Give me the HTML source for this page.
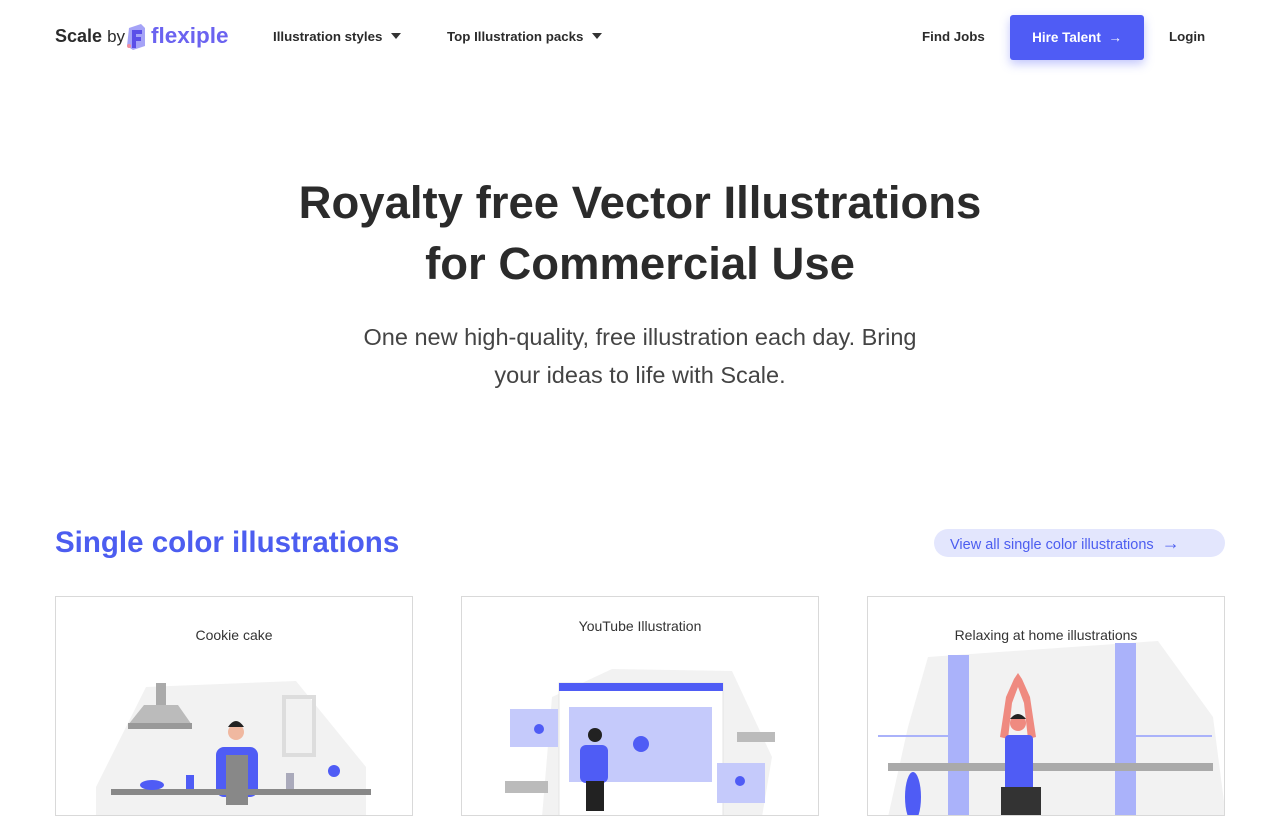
<!DOCTYPE html>
<html><head><meta charset="utf-8"><style>
*{margin:0;padding:0;box-sizing:border-box}
body{width:1280px;height:800px;overflow:hidden;background:#fff;font-family:"Liberation Sans",sans-serif;color:#333;position:relative}
.a{position:absolute}
.nav{font-size:13.3px;font-weight:bold;color:#2b2b2b}
.tri{display:inline-block;width:0;height:0;border-left:5px solid transparent;border-right:5px solid transparent;border-top:6px solid #333;margin-left:9px;vertical-align:2px}
.card{position:absolute;top:596px;width:358px;height:220px;border:1px solid #d9d9d9;overflow:hidden;background:#fff}
.card .t{position:absolute;left:0;right:0;text-align:center;font-size:14px;color:#333}
</style></head><body>
<div class="a" style="left:55px;top:26px;font-size:18px;color:#2b2b2b;white-space:nowrap"><span style="font-weight:600">Scale</span> <span style="font-size:17px">by</span></div>
<svg class="a" style="left:125px;top:22px" width="22" height="30" viewBox="0 0 22 30"><path d="M4 6 L16 2 L20 6 L20 24 L8 28 L2 24 Z" fill="#a5a3f7"/><path d="M7 8 H17 V12 H11 V15 H16 V19 H11 V26 H7 Z" fill="#5b4fe8"/><circle cx="4" cy="24" r="2" fill="#f08fa0"/></svg>
<div class="a" style="left:151px;top:23px;font-size:22.5px;font-weight:bold;color:#6b63f0">flexiple</div>
<div class="a nav" style="left:273px;top:29px">Illustration styles<span class="tri"></span></div>
<div class="a nav" style="left:447px;top:29px">Top Illustration packs<span class="tri"></span></div>
<div class="a nav" style="left:922px;top:29px">Find Jobs</div>
<div class="a" style="left:1010px;top:15px;width:134px;height:45px;background:#4f5cf5;border-radius:3px;box-shadow:0 4px 10px rgba(79,92,245,.35);color:#fff;font-size:13.5px;font-weight:bold;line-height:45px;text-align:center">Hire Talent &nbsp;→</div>
<div class="a nav" style="left:1169px;top:29px">Login</div>
<div class="a" style="left:0;width:1280px;top:172px;text-align:center;font-size:45.5px;font-weight:bold;line-height:61px;color:#2b2b2b">Royalty free Vector Illustrations<br>for Commercial Use</div>
<div class="a" style="left:0;width:1280px;top:318px;text-align:center;font-size:23.5px;line-height:38px;color:#444">One new high-quality, free illustration each day. Bring<br>your ideas to life with Scale.</div>
<div class="a" style="left:55px;top:526px;font-size:29.5px;font-weight:bold;color:#4c5df0">Single color illustrations</div>
<div class="a" style="left:934px;top:529px;width:291px;height:28px;background:#e3e6fd;border-radius:14px;color:#4c5df0;font-size:14.5px;line-height:28px;padding-left:16px;white-space:nowrap">View all single color illustrations &nbsp;<span style="font-size:18px">→</span></div>

<div class="card" style="left:55px"><div class="t" style="top:30px">Cookie cake</div>
<svg class="a" style="left:0;top:0" width="358" height="220">
<path d="M40 190 L90 90 L240 84 L310 170 L310 220 L40 220Z" fill="#f2f2f2"/>
<rect x="100" y="86" width="10" height="22" fill="#aaa"/><path d="M88 108 H122 L136 128 H72Z" fill="#bbb"/><rect x="72" y="126" width="64" height="6" fill="#999"/>
<rect x="228" y="100" width="30" height="58" fill="none" stroke="#ddd" stroke-width="4"/>
<rect x="160" y="150" width="42" height="50" rx="8" fill="#4f5cf5"/><rect x="170" y="158" width="22" height="50" fill="#888"/>
<circle cx="180" cy="135" r="8" fill="#f0b8a0"/><path d="M172 130 Q180 118 188 130Z" fill="#222"/>
<rect x="55" y="192" width="260" height="6" fill="#888"/><ellipse cx="96" cy="188" rx="12" ry="5" fill="#4f5cf5"/><rect x="130" y="178" width="8" height="14" fill="#4f5cf5"/><rect x="230" y="176" width="8" height="16" fill="#aab"/><circle cx="278" cy="174" r="6" fill="#4f5cf5"/>
</svg></div>

<div class="card" style="left:461px"><div class="t" style="top:21px">YouTube Illustration</div>
<svg class="a" style="left:0;top:0" width="358" height="220">
<path d="M90 100 L150 72 L270 74 L310 160 L300 220 L80 220Z" fill="#f2f2f2"/>
<rect x="97" y="86" width="164" height="140" fill="#fff" stroke="#e4e4e4"/><rect x="97" y="86" width="164" height="8" fill="#4f5cf5"/>
<rect x="107" y="110" width="143" height="75" fill="#c5cafb"/><circle cx="179" cy="147" r="8" fill="#4f5cf5"/>
<rect x="48" y="112" width="48" height="38" fill="#c5cafb"/><circle cx="77" cy="132" r="5" fill="#4f5cf5"/>
<rect x="255" y="166" width="48" height="40" fill="#c5cafb"/><circle cx="278" cy="184" r="5" fill="#4f5cf5"/>
<rect x="275" y="135" width="38" height="10" fill="#bbb"/><rect x="43" y="184" width="43" height="12" fill="#bbb"/>
<rect x="118" y="148" width="28" height="38" rx="6" fill="#4f5cf5"/><rect x="124" y="184" width="18" height="30" fill="#222"/><circle cx="133" cy="138" r="7" fill="#222"/>
</svg></div>

<div class="card" style="left:867px"><div class="t" style="top:30px">Relaxing at home illustrations</div>
<svg class="a" style="left:0;top:0" width="358" height="220">
<path d="M60 60 L290 44 L345 120 L358 220 L20 220 L40 130Z" fill="#f2f2f2"/>
<rect x="80" y="58" width="21" height="170" fill="#aab2fa"/><rect x="247" y="46" width="21" height="180" fill="#aab2fa"/>
<rect x="10" y="138" width="70" height="2" fill="#aab2fa"/><rect x="268" y="138" width="76" height="2" fill="#aab2fa"/>
<rect x="20" y="166" width="325" height="8" fill="#aaa"/>
<path d="M146 82 L150 76 L154 82 L162 100 L168 140 L160 142 L156 106 L150 90 L144 106 L140 142 L132 140 L138 100Z" fill="#ef8a80"/>
<circle cx="150" cy="126" r="8" fill="#ef8a80"/><path d="M142 122 Q150 112 158 122Z" fill="#222"/>
<rect x="137" y="138" width="28" height="60" rx="4" fill="#4f5cf5"/><rect x="133" y="190" width="40" height="30" fill="#333"/>
<ellipse cx="45" cy="200" rx="8" ry="25" fill="#4f5cf5"/>
</svg></div>
</body></html>
